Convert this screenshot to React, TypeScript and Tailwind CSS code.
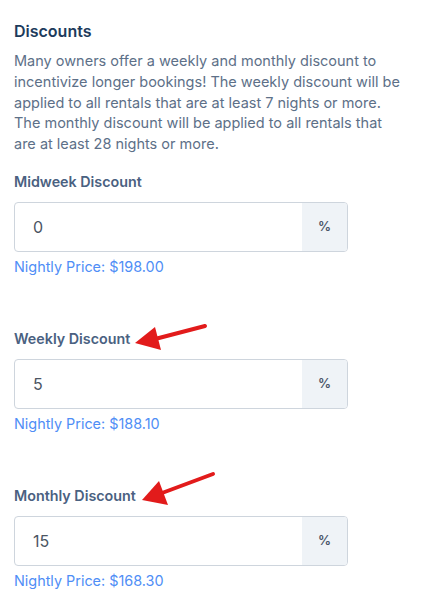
const fields = [
  { label: "Midweek Discount", value: "0", price: "$198.00", arrow: null },
  { label: "Weekly Discount", value: "5", price: "$188.10", arrow: "weekly" },
  { label: "Monthly Discount", value: "15", price: "$168.30", arrow: "monthly" },
];

function WeeklyArrow() {
  return (
    <svg className="absolute left-[117px] top-[-8px]" width="80" height="34" viewBox="0 0 80 34">
      <line x1="26" y1="17.5" x2="74" y2="5" stroke="#e21b1b" strokeWidth="4" strokeLinecap="round" />
      <polygon points="4,22 24,6 30,29" fill="#e21b1b" />
    </svg>
  );
}

function MonthlyArrow() {
  return (
    <svg className="absolute left-[124px] top-[-18px]" width="80" height="42" viewBox="0 0 80 42">
      <line x1="24" y1="25" x2="75" y2="6" stroke="#e21b1b" strokeWidth="4" strokeLinecap="round" />
      <polygon points="4,32 21,13 30,37" fill="#e21b1b" />
    </svg>
  );
}

export default function App() {
  return (
    <div className="min-h-[597px] w-[423px] bg-white pl-[14px] pr-[20px] pt-[19px] font-['Inter',sans-serif]">
      <h2 className="text-[16px] leading-[24px] font-semibold text-[#1d3b5c]">Discounts</h2>
      <p className="mt-[8px] text-[14.5px] leading-[20.75px] text-[#5d7088]">
        Many owners offer a weekly and monthly discount to incentivize longer bookings! The weekly discount will be
        applied to all rentals that are at least 7 nights or more. The monthly discount will be applied to all rentals
        that are at least 28 nights or more.
      </p>

      <div className="mt-[17px] flex flex-col gap-[52px]">
        {fields.map((f) => (
          <div key={f.label}>
            <div className="relative">
              <label className="block text-[14.3px] leading-[20px] font-semibold text-[#4a6181]">{f.label}</label>
              {f.arrow === "weekly" && <WeeklyArrow />}
              {f.arrow === "monthly" && <MonthlyArrow />}
            </div>
            <div className="mt-[10px] flex h-[50px] w-[334px] overflow-hidden rounded-[4px] border border-[#ced5dd]">
              <div className="flex flex-1 items-center pl-[18px] text-[16px] text-[#4b5563]">{f.value}</div>
              <div className="flex w-[45px] items-center justify-center bg-[#eff3f7] text-[13px] font-semibold text-[#4a5568]">
                %
              </div>
            </div>
            <div className="mt-[5px] text-[14.4px] leading-[20px] text-[#4f8ef6]">Nightly Price: {f.price}</div>
          </div>
        ))}
      </div>
    </div>
  );
}
